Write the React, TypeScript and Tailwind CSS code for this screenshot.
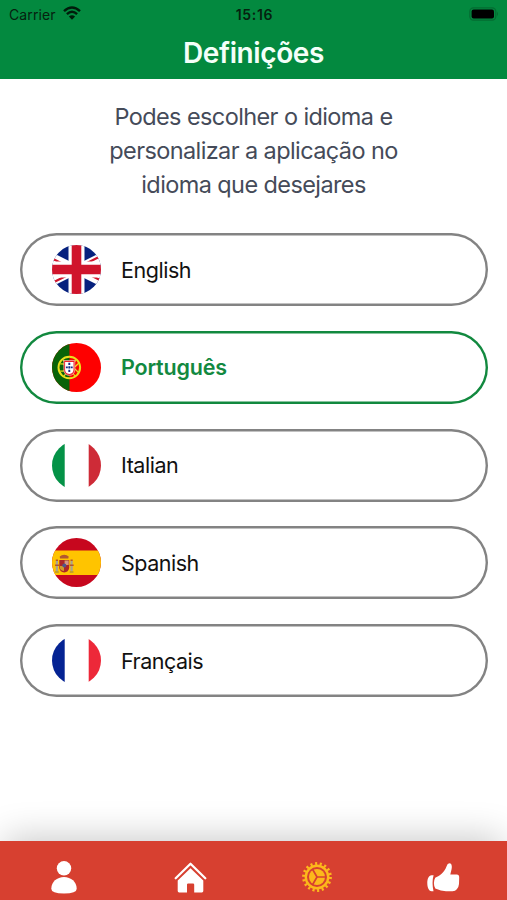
import React, { useState } from 'react';

interface Language {
    id: string;
    label: string;
    spacing: string;
    Flag: () => React.ReactElement;
}

const FlagUK = () => (
    <svg viewBox="0 0 49 49" className="size-full">
        <rect width="49" height="49" fill="#06217e" />
        <path stroke="#fff" strokeWidth="8.6" d="M-24.5 0 73.5 49M73.5 0-24.5 49" />
        <path stroke="#d0142c" strokeWidth="2.2" d="M-4 11.6 14 20.6M53 8.9 35 17.9M-4 40.1 14 31.1M53 37.4 35 28.4" />
        <path stroke="#fff" strokeWidth="16" d="M24.5 0V49M0 24.5H49" />
        <path stroke="#d0142c" strokeWidth="9.6" d="M24.5 0V49M0 24.5H49" />
    </svg>
);

const FlagPortugal = () => (
    <svg viewBox="0 0 49 49" className="size-full" fill="none">
        <rect width="49" height="49" fill="#fe0000" />
        <rect width="17.5" height="49" fill="#096309" />
        <circle cx="17.3" cy="24.5" r="10.8" stroke="#e9df1c" strokeWidth="2" />
        <path stroke="#e9df1c" strokeWidth="1.2" d="M8 21Q18 20 26 29M8 28Q19 29 27 20M11 17 23 33M12 33 24 17" />
        <path fill="#f0202a" stroke="#f3d9d0" strokeWidth="0.6" d="M11.8 17.5H22.8V26.5Q22.8 32 17.3 32.5 11.8 32 11.8 26.5Z" />
        <path fill="#fff" d="M13.1 19H21.5V26.5Q21.5 30.6 17.3 31 13.1 30.6 13.1 26.5Z" />
        <path stroke="#152d86" strokeWidth="1.9" d="M17.3 19.8V22M17.3 23.3V25.5M17.3 26.8V29M13.9 24.4H15.8M18.8 24.4H20.7" />
    </svg>
);

const FlagItaly = () => (
    <svg viewBox="0 0 49 49" className="size-full">
        <rect width="49" height="49" fill="#fff" />
        <rect width="12.7" height="49" fill="#049247" />
        <rect x="36.7" width="12.3" height="49" fill="#ce2b37" />
    </svg>
);

const FlagSpain = () => (
    <svg viewBox="0 0 49 49" className="size-full">
        <rect width="49" height="49" fill="#c7071e" />
        <rect y="12.5" width="49" height="24.5" fill="#ffc400" />
        <path fill="#a9a391" d="M3.8 23H6V33H3.8ZM18.5 23H20.7V33H18.5Z" />
        <path fill="#b3572f" d="M3 26.5H7V28H3ZM17.7 26.5H21.7V28H17.7ZM3.8 21.5H6V23H3.8ZM18.5 21.5H20.7V23H18.5ZM8 20.5 7.7 18.5Q9.5 17 12.2 16.7 15 17 16.7 18.5L16.3 20.5Z" />
        <path fill="#ad2627" d="M7.3 22H17.2V30Q16.5 34 12.2 34.5 8 34 7.3 30Z" />
        <path fill="#d2a06a" d="M12.6 22.5H16.7V27H12.6Z" />
        <path fill="#cf9a29" d="M7.9 28H12V33Q8.5 32.5 7.9 30Z" />
        <circle cx="12.3" cy="27.6" r="2" fill="#52558c" />
        <path fill="#d8899b" d="M13.8 23.5H15.6V26H13.8Z" />
        <path fill="#8a7c53" d="M3 33.4H6.8V34.6H3ZM17.7 33.4H21.5V34.6H17.7Z" />
    </svg>
);

const FlagFrance = () => (
    <svg viewBox="0 0 49 49" className="size-full">
        <rect width="49" height="49" fill="#fff" />
        <rect width="12.7" height="49" fill="#052393" />
        <rect x="36.7" width="12.3" height="49" fill="#ed2839" />
    </svg>
);

const languages: Language[] = [
    { id: 'en', label: 'English', spacing: 'tracking-[-0.45px]', Flag: FlagUK },
    { id: 'pt', label: 'Português', spacing: 'tracking-[-0.2px]', Flag: FlagPortugal },
    { id: 'it', label: 'Italian', spacing: 'tracking-[-0.45px]', Flag: FlagItaly },
    { id: 'es', label: 'Spanish', spacing: 'tracking-[-0.5px]', Flag: FlagSpain },
    { id: 'fr', label: 'Français', spacing: 'tracking-[-0.5px]', Flag: FlagFrance },
];

const StatusBar = () => (
    <div className="grid h-7 grid-cols-3 items-center pl-[9px] pr-[7px] text-[14px] text-[#06210f]">
        <div className="flex items-center gap-[7px]">
            <span className="tracking-[0.1px]">Carrier</span>
            <svg width="18" height="14" viewBox="0 0 18 14" fill="none" stroke="#001c0b" className="-mt-0.5">
                <path strokeWidth="2.4" d="M1 5.2Q9-2.4 17 5.2M3.9 8.2Q9 3.4 14.1 8.2" />
                <path fill="#001c0b" stroke="none" d="M9 13.8 5.9 10.6Q9 7.8 12.1 10.6Z" />
            </svg>
        </div>
        <span className="text-center font-semibold tracking-[0.7px]">15:16</span>
        <svg width="31" height="14" viewBox="0 0 31 14" className="-mt-px justify-self-end">
            <rect x="0.8" y="0.8" width="26" height="12.4" rx="3.6" fill="none" stroke="#056c32" strokeWidth="1.2" />
            <rect x="2.6" y="2.6" width="22.4" height="8.8" rx="2" fill="#000" />
            <path fill="#056c32" d="M28 4.8Q30 7 28 9.2Z" />
        </svg>
    </div>
);

const PersonIcon = () => (
    <svg width="26" height="33" viewBox="0 0 26 33" fill="#fff">
        <circle cx="13" cy="7.3" r="7.2" />
        <path d="M13 16C20 16 25.7 21 25.7 27.8Q25.7 32.6 13 32.6 0.3 32.6 0.3 27.8C0.3 21 6 16 13 16Z" />
    </svg>
);

const HomeIcon = () => (
    <svg width="33" height="31" viewBox="0 0 33 31" fill="none">
        <path stroke="#fff" strokeWidth="2.3" strokeLinecap="round" strokeLinejoin="round" d="M1.7 16.2 16.5 1.8 31.3 16.2" />
        <path fill="#fff" d="M16.5 6.2 29.3 18.5V29Q29.3 30.4 27.9 30.4H20.2V22.6Q20.2 21.4 19 21.4H14.2Q13 21.4 13 22.6V30.4H5.1Q3.7 30.4 3.7 29V18.5Z" />
    </svg>
);

const GearIcon = () => (
    <svg width="30" height="30" viewBox="0 0 30 30" fill="none" stroke="#fcb81b">
        <circle cx="15" cy="15" r="13.4" strokeWidth="3" strokeDasharray="2.1 2.577" />
        <circle cx="15" cy="15" r="11.2" strokeWidth="2.4" />
        <circle cx="15" cy="15" r="8" fill="#fcb81b" stroke="none" />
        <path stroke="#d74030" strokeWidth="1.7" d="M15 15H24M15 15 10.4 7M15 15 10.4 23" />
    </svg>
);

const ThumbIcon = () => (
    <svg width="33" height="29" viewBox="0 0 33 29" fill="#fff">
        <path d="M6.6 12.2Q4.6 19 6.5 28.2H4.6C1.5 28.2.3 24.2.3 20.1S1.6 12.2 4.6 12.2Z" />
        <path d="M8.2 14.7C12 13 17 10 19.6 3.2Q20.4.3 22.4.3C25 .3 25.2 4 24.5 6.6L23.3 11.5H29.7Q32.3 11.7 32.2 14.4L32 21Q31.8 24 29.8 26.2 28.4 28.2 25.5 28.2H19Q14 28 8.3 25.5 5.5 20 8.2 14.7Z" />
    </svg>
);

const tabs = [
    { name: 'profile', Icon: PersonIcon },
    { name: 'home', Icon: HomeIcon },
    { name: 'settings', Icon: GearIcon },
    { name: 'like', Icon: ThumbIcon },
];

const App = () => {
    const [selected, setSelected] = useState('pt');

    return (
        <div className="flex h-[900px] w-[507px] flex-col overflow-hidden bg-white font-['Inter',sans-serif]">
            <header className="h-[79px] shrink-0 bg-[#03893f]">
                <StatusBar />
                <h1 className="text-center text-[28px] leading-[50px] font-semibold tracking-[-0.4px] text-[#f4fff9]">Definições</h1>
            </header>

            <main className="flex flex-1 flex-col px-5 pt-[21px]">
                <p className="text-center text-[23.5px] leading-[34.2px] tracking-[-0.6px] text-[#454b59]">
                    Podes escolher o idioma e<br />
                    personalizar a aplicação no<br />
                    idioma que desejares
                </p>

                <div className="mt-[30.8px] flex flex-col gap-[24.7px]">
                    {languages.map(({ id, label, spacing, Flag }) => (
                        <button
                            key={id}
                            onClick={() => setSelected(id)}
                            className={`flex h-[73px] w-[468px] items-center gap-5 rounded-full pl-8 text-[21.5px] ring-[2.4px] ring-inset ${spacing} ${
                                selected === id ? 'font-semibold text-[#12893f] ring-[#12893f]' : 'text-[#111] ring-[#838383]'
                            }`}
                        >
                            <span className="size-[49px] overflow-hidden rounded-full">
                                <Flag />
                            </span>
                            {label}
                        </button>
                    ))}
                </div>
            </main>

            {/* Bottom tabs */}
            <nav className="flex h-[59px] shrink-0 bg-[#d74030] pt-[13px] pl-px shadow-[0_-8px_36px_-5px_rgba(0,0,0,0.22)]">
                {tabs.map(({ name, Icon }) => (
                    <div key={name} className="flex flex-1 items-center justify-center">
                        <Icon />
                    </div>
                ))}
            </nav>
        </div>
    );
};

export default App;
